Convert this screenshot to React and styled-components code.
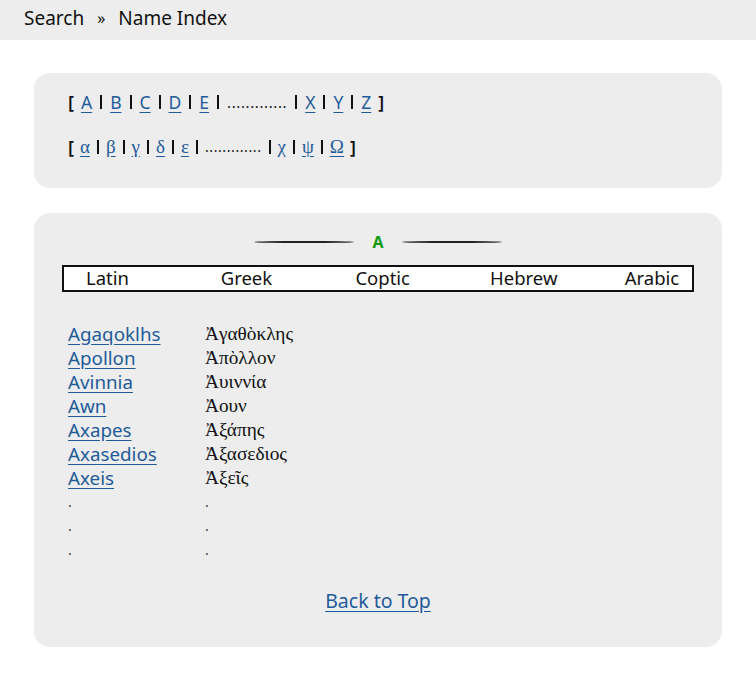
import React from 'react';
import styled, { createGlobalStyle } from 'styled-components';

const GlobalStyle = createGlobalStyle`
  body {
    margin: 0;
    background: #fff;
    font-family: "Noto Sans", "Open Sans", sans-serif;
    color: #111;
  }
`;

const TopBar = styled.div`
  height: 40px;
  box-sizing: border-box;
  background: #ededed;
  display: flex;
  align-items: center;
  padding: 0 0 4px 24px;
  font-size: 19px;
  gap: 13px;
`;

const Chevron = styled.span`
  font-size: 16px;
`;

const Main = styled.div`
  padding: 33px 34px 0;
  display: flex;
  flex-direction: column;
  gap: 25px;
`;

const Card = styled.div`
  background: #ededed;
  border-radius: 16px;
  height: ${p => p.$h}px;
  box-sizing: border-box;
  padding: ${p => p.$pad};
  display: flex;
  flex-direction: column;
`;

const IndexRow = styled.div`
  display: flex;
  align-items: center;
  gap: ${p => (p.$greek ? 6 : 7)}px;
  font-size: 17.5px;
  height: 45px;
`;

const Bracket = styled.span`
  font-weight: 600;
  font-size: 18px;
`;

const Bar = styled.span`
  display: inline-block;
  width: 2px;
  height: 14px;
  background: #111;
  margin: 0 1px;
`;

const Letter = styled.a`
  color: #1f5b9a;
  text-decoration: underline;
  text-underline-offset: 3px;
  font-family: ${p => (p.$greek ? '"Liberation Serif", "DejaVu Serif", serif' : 'inherit')};
  font-size: ${p => (p.$greek ? '19px' : '17.5px')};
`;

const Dots = styled.span`
  font-size: ${p => (p.$greek ? 14 : 15)}px;
  letter-spacing: 0.6px;
`;

const Heading = styled.div`
  display: flex;
  align-items: center;
  justify-content: center;
  gap: 18px;
  height: 24px;
  margin-bottom: 11px;
`;

const Rule = styled.span`
  width: 100px;
  height: 2px;
  background: #222;
  border-radius: 50%;
`;

const HeadLetter = styled.span`
  color: #129a12;
  font-weight: 700;
  font-size: 16px;
`;

const Tabs = styled.div`
  margin: 0 28px;
  background: #fff;
  border: 2px solid #111;
  height: 27px;
  box-sizing: border-box;
  display: grid;
  grid-template-columns: repeat(4, 134.7px) auto;
  align-items: center;
  padding: 0 0 2px 22px;
  font-size: 18.5px;
  line-height: 20px;
`;

const List = styled.div`
  display: grid;
  grid-template-columns: 137px auto;
  margin: 30px 0 0 34px;
`;

const NameLink = styled.a`
  color: #1f5b9a;
  text-decoration: underline;
  text-underline-offset: 3px;
  font-size: 18.8px;
  line-height: 24px;
  height: 24px;
`;

const GreekName = styled.span`
  font-family: "Liberation Serif", "DejaVu Serif", serif;
  font-size: 19.3px;
  line-height: 24px;
  height: 24px;
`;

const Dot = styled.span`
  line-height: 24px;
  height: 24px;
  font-size: 14px;
  color: #444;
`;

const Footer = styled.div`
  display: flex;
  justify-content: center;
  margin-top: 25px;
`;

const BackLink = styled.a`
  color: #1f5b9a;
  text-decoration: underline;
  text-underline-offset: 3px;
  font-size: 19.5px;
`;

const names = [
  ['Agaqoklhs', 'Ἀγαθὸκλης'],
  ['Apollon', 'Ἀπὸλλον'],
  ['Avinnia', 'Ἀυιννία'],
  ['Awn', 'Ἀουν'],
  ['Axapes', 'Ἀξάπης'],
  ['Axasedios', 'Ἀξασεδιος'],
  ['Axeis', 'Ἀξεῖς'],
];

function LetterRow({ first, last, greek }) {
  return (
    <IndexRow $greek={greek}>
      <Bracket>[</Bracket>
      {first.map(l => (
        <React.Fragment key={l}>
          <Letter href="#" $greek={greek}>{l}</Letter>
          <Bar />
        </React.Fragment>
      ))}
      <Dots $greek={greek}>.............</Dots>
      {last.map(l => (
        <React.Fragment key={l}>
          <Bar />
          <Letter href="#" $greek={greek}>{l}</Letter>
        </React.Fragment>
      ))}
      <Bracket>]</Bracket>
    </IndexRow>
  );
}

export default function App() {
  return (
    <>
      <GlobalStyle />
      <TopBar>
        <span>Search</span>
        <Chevron>»</Chevron>
        <span>Name Index</span>
      </TopBar>
      <Main>
        <Card $h={115} $pad="6px 34px">
          <LetterRow first={['A', 'B', 'C', 'D', 'E']} last={['X', 'Y', 'Z']} />
          <LetterRow first={['α', 'β', 'γ', 'δ', 'ε']} last={['χ', 'ψ', 'Ω']} greek />
        </Card>
        <Card $h={434} $pad="17px 0 0">
          <Heading>
            <Rule />
            <HeadLetter>A</HeadLetter>
            <Rule />
          </Heading>
          <Tabs>
            <span>Latin</span>
            <span>Greek</span>
            <span>Coptic</span>
            <span>Hebrew</span>
            <span>Arabic</span>
          </Tabs>
          <List>
            {names.map(([lat, gr]) => (
              <React.Fragment key={lat}>
                <div><NameLink href="#">{lat}</NameLink></div>
                <GreekName>{gr}</GreekName>
              </React.Fragment>
            ))}
            {[0, 1, 2].map(i => (
              <React.Fragment key={i}>
                <Dot>.</Dot>
                <Dot>.</Dot>
              </React.Fragment>
            ))}
          </List>
          <Footer>
            <BackLink href="#">Back to Top</BackLink>
          </Footer>
        </Card>
      </Main>
    </>
  );
}
